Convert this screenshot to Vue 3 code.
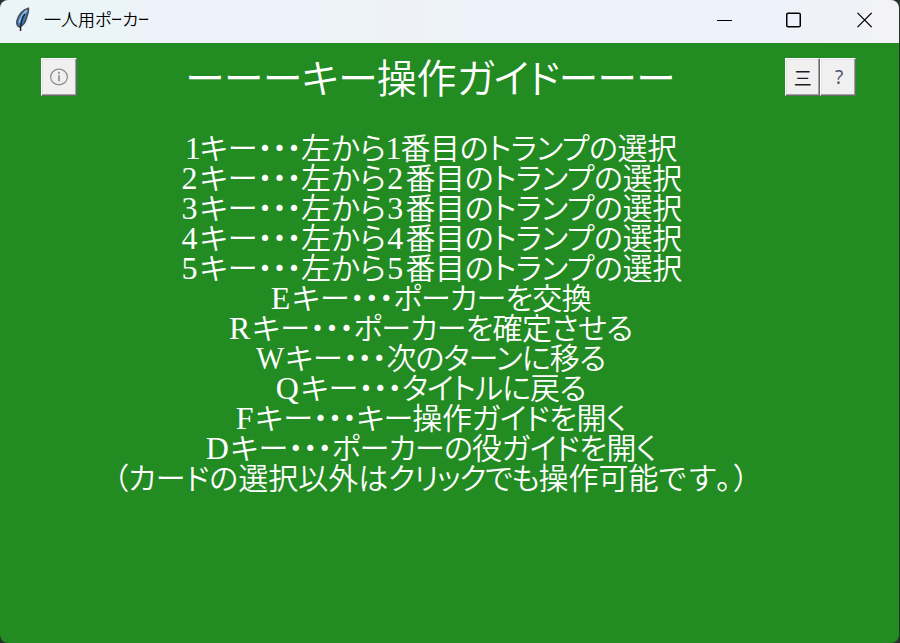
<script setup>
const lines = [
  { key: '1', text: '左から', digit: '1', rest: '番目のトランプの選択' },
  { key: '2', text: '左から', digit: '2', rest: '番目のトランプの選択' },
  { key: '3', text: '左から', digit: '3', rest: '番目のトランプの選択' },
  { key: '4', text: '左から', digit: '4', rest: '番目のトランプの選択' },
  { key: '5', text: '左から', digit: '5', rest: '番目のトランプの選択' },
  { key: 'E', text: 'ポーカーを', rest: '交換' },
  { key: 'R', text: 'ポーカーを', rest: '確定させる' },
  { key: 'W', text: '次のターンに', rest: '移る' },
  { key: 'Q', text: 'タイトルに', rest: '戻る' },
  { key: 'F', text: 'キー', rest: '操作ガイドを開く' },
  { key: 'D', text: 'ポーカーの', rest: '役ガイドを開く' },
]
</script>

<template>
  <div class="window">
    <header class="titlebar">
      <svg class="feather" width="16" height="26" viewBox="0 0 16 26">
        <path d="M13.4 1.2 C8 2.5 3 8 1.9 14 C1.4 17 2.5 19.5 4.4 20 C8 18.7 10.5 14.8 11.5 11 C12.4 8 14 4 13.4 1.2Z" fill="#3f78b8" stroke="#4a4d52" stroke-width="1.5" />
        <path d="M12 3.2 C8 6.5 5.3 11 4.3 16" fill="none" stroke="#8fbde8" stroke-width="1.8" />
        <path d="M9.8 7 C6.8 11 5.4 17 5.5 24" fill="none" stroke="#20242a" stroke-width="1.5" />
      </svg>
      <span class="caption">一人用ポ<span class="bar">ー</span>カ<span class="bar">ー</span></span>
      <div class="controls">
        <svg width="16" height="16" viewBox="0 0 16 16"><path d="M0 8.5H15" stroke="#000" /></svg>
        <svg width="16" height="16" viewBox="0 0 16 16"><rect x="-.25" y="1.25" width="13.5" height="13.5" rx="1.3" fill="none" stroke="#000" stroke-width="1.5" /></svg>
        <svg width="16" height="16" viewBox="0 0 16 16"><path d="M.5 .9L14.7 15.1M14.7 .9L.5 15.1" stroke="#000" stroke-width="1.3" /></svg>
      </div>
    </header>
    <main class="table">
      <div class="top">
        <button class="tool">
          <svg width="20" height="18" viewBox="0 0 20 18"><ellipse cx="10" cy="9" rx="8.4" ry="7.8" fill="none" stroke="#8c8c90" stroke-width="1.2" /><path d="M10 7.2V13.2" fill="none" stroke="#939398" stroke-width="1.8" /><circle cx="10" cy="4.9" r="1.1" fill="#939398" /></svg>
        </button>
        <h1 class="heading"><span class="dash">ーーー</span><span class="kana">キー</span>操作<span class="kana">ガイド</span><span class="dash">ーーー</span></h1>
        <div class="pair">
          <button class="tool menu">三</button>
          <button class="tool q">?</button>
        </div>
      </div>
      <div class="guide">
        <p v-for="l in lines" :key="l.key" class="line"><span class="latin" :class="{ digit: l.digit, one: l.key === '1', wide: l.key === 'W' }">{{ l.key }}</span>キー<span class="dots">・・・</span><span :class="{ tight: !l.digit }">{{ l.text }}</span><span v-if="l.digit" class="latin digit" :class="{ one: l.digit === '1' }">{{ l.digit }}</span><span class="rest">{{ l.rest }}</span></p>
        <p class="line">（カードの選択以外は<span class="click">クリックでも</span>操作可能<span class="end">です。</span>）</p>
      </div>
    </main>
  </div>
</template>

<style>
body { background: #28322c; }
</style>

<style scoped>
.window { width: 899px; height: 643px; border-radius: 8px; overflow: hidden; display: flex; flex-direction: column; }
.titlebar { height: 43px; display: flex; align-items: center; background: linear-gradient(90deg, #ebf4f7 0, #ebf4f7 12%, #eef2fb 20%, #eef2f8 45%, #eef2fb 65%, #eef2fb 85%, #f3f3f6 100%); padding: 0 26px 4px 15px; box-sizing: border-box; }
.caption { margin: -2px 0 0 13px; font: 350 17px/24px "Noto Sans CJK JP", sans-serif; font-feature-settings: "palt"; color: #000; }
.bar { display: inline-block; width: 11px; transform: scaleX(.66); transform-origin: left; }
.controls { margin-left: auto; display: flex; gap: 54px; }
.controls svg { display: block; overflow: visible; }
.table { flex: 1; background: #228b22; }
.top { display: flex; justify-content: space-between; padding: 15px 43px 0 41px; height: 53px; box-sizing: border-box; }
.tool { width: 35.5px; height: 38px; box-sizing: border-box; padding: 0; border: 1px solid; border-color: #fff #696969 #696969 #fff; box-shadow: inset -1px -1px #a0a0a0, inset 1px 1px #e3e3e3; background: #f0f0f0; display: flex; align-items: center; justify-content: center; }
.pair { display: flex; }
.menu { font: 400 18px/20px "Noto Sans CJK JP", sans-serif; color: #1c1c24; }
.q { font: 19px "Noto Sans", sans-serif; color: #4b5568; padding-left: 2px; }
.heading { margin: -2px 0 0 -1px; font: 350 40px/40px "Noto Sans CJK JP", sans-serif; font-feature-settings: "palt"; color: #fff; white-space: nowrap; }
.dash { letter-spacing: -.6px; }
.kana { letter-spacing: -1px; }
.guide { padding-top: 38px; width: 862px; }
.line { margin: 0; height: 30px; text-align: center; white-space: nowrap; font: 350 30px/30px "Liberation Serif", "Noto Sans CJK JP", sans-serif; font-feature-settings: "palt"; color: #fff; }
.latin { font-size: 32px; line-height: 1px; letter-spacing: 1.8px; }
.digit { letter-spacing: 2.2px; margin-left: 1.3px; }
.one { letter-spacing: -1px; margin-left: -.5px; }
.wide { display: inline-block; width: 29px; transform: scaleX(.93); transform-origin: left; }
.dots { letter-spacing: -.5px; }
.tight { letter-spacing: -.9px; }
.rest { letter-spacing: -.4px; }
.click { letter-spacing: -1.3px; }
.end { letter-spacing: 2.8px; }
</style>
